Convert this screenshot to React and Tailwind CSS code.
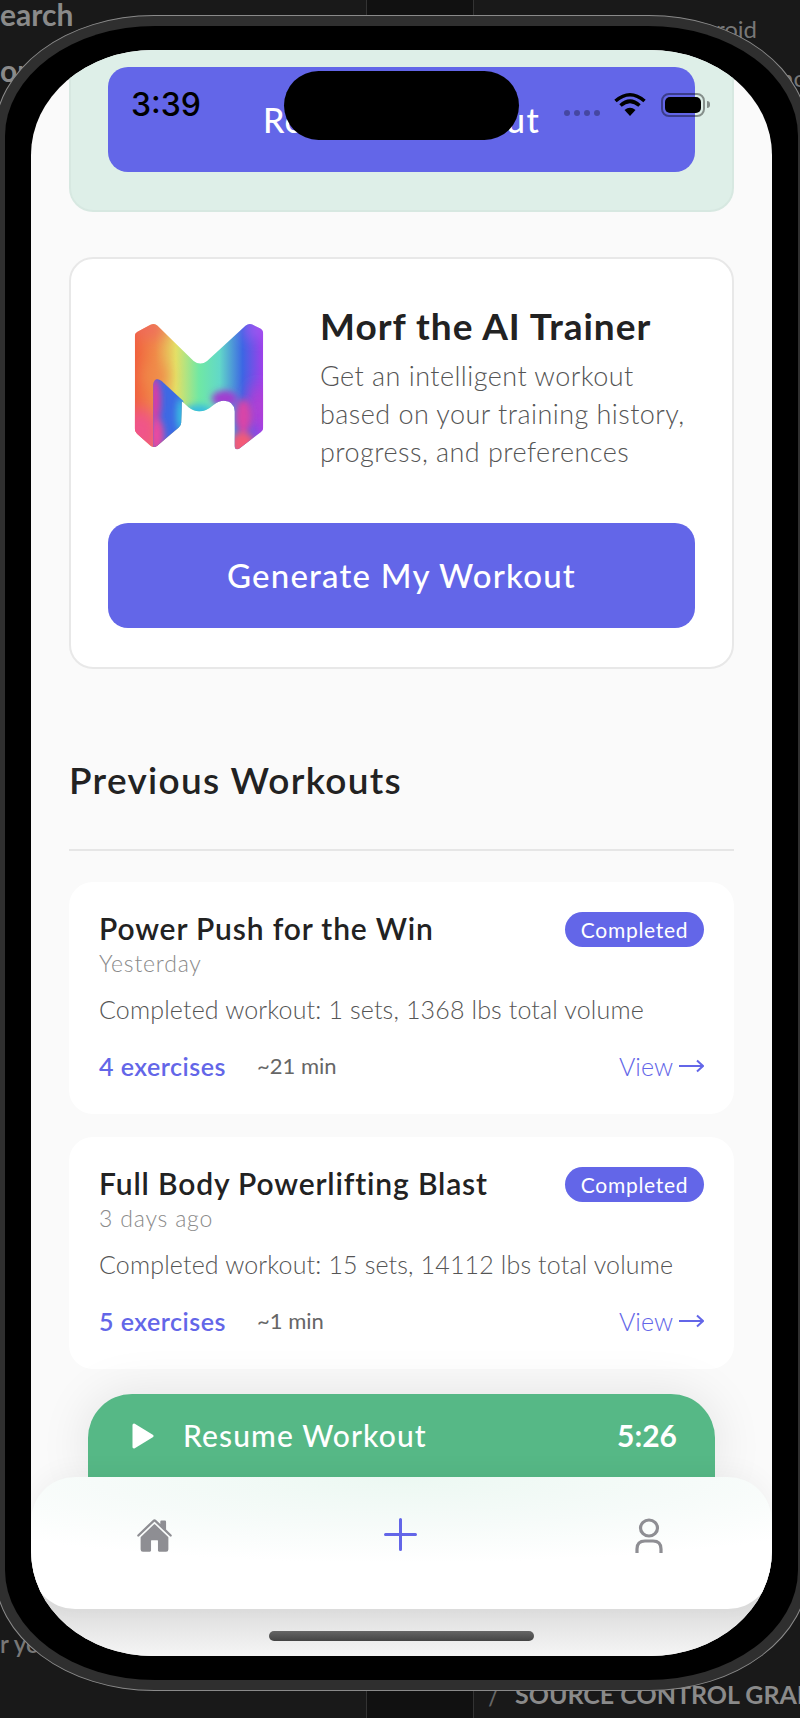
import React from "react";
import { IoHome } from "react-icons/io5";

const font = { fontFamily: "Lato, 'Liberation Sans', sans-serif" };

const workouts = [
  {
    title: "Power Push for the Win",
    date: "Yesterday",
    summary: "Completed workout: 1 sets, 1368 lbs total volume",
    exercises: "4 exercises",
    duration: "~21 min",
  },
  {
    title: "Full Body Powerlifting Blast",
    date: "3 days ago",
    summary: "Completed workout: 15 sets, 14112 lbs total volume",
    exercises: "5 exercises",
    duration: "~1 min",
  },
];

const MorfLogo = () => (
  <svg width="130" height="129" viewBox="103 68 386 382" className="shrink-0">
    <defs>
      <clipPath id="morf-m">
        <path d="M112 94 L152 73 Q164 67 172 75 L280 180 Q300 196 320 180 L434 76 Q444 67 454 72 L478 84 Q487 89 487 100 L487 378 Q487 386 480 391 L416 440 Q402 448 402 432 L402 330 Q400 298 370 298 Q355 298 340 310 Q300 345 265 318 L245 300 L243 364 Q243 372 236 378 L172 432 Q162 440 152 432 L112 396 Q105 390 105 380 L105 108 Q105 98 112 94 Z" />
      </clipPath>
      <clipPath id="morf-fold">
        <path d="M160 250 Q165 225 185 240 L250 300 L250 440 L160 440 Z" />
      </clipPath>
      <linearGradient id="morf-base" x1="0" y1="0" x2="1" y2="0">
        <stop offset="0" stopColor="#f0603e" />
        <stop offset="0.16" stopColor="#f08a48" />
        <stop offset="0.32" stopColor="#e4e066" />
        <stop offset="0.5" stopColor="#70e8a4" />
        <stop offset="0.66" stopColor="#62d8c8" />
        <stop offset="0.84" stopColor="#3c66e4" />
        <stop offset="1" stopColor="#a040ea" />
      </linearGradient>
      <filter id="morf-blur" x="-60%" y="-60%" width="220%" height="220%">
        <feGaussianBlur stdDeviation="24" />
      </filter>
      <filter id="morf-soft" x="-50%" y="-50%" width="200%" height="200%">
        <feGaussianBlur stdDeviation="10" />
      </filter>
    </defs>
    <g clipPath="url(#morf-m)">
      <rect x="105" y="60" width="382" height="400" fill="url(#morf-base)" />
      <g filter="url(#morf-blur)">
        <ellipse cx="150" cy="85" rx="55" ry="24" fill="#ee6a62" />
        <ellipse cx="165" cy="225" rx="34" ry="36" fill="#f08a48" />
        <ellipse cx="120" cy="390" rx="60" ry="70" fill="#f0558a" />
        <ellipse cx="465" cy="85" rx="36" ry="24" fill="#a85cf4" />
        <ellipse cx="470" cy="320" rx="28" ry="70" fill="#b83cd0" />
      </g>
      <g filter="url(#morf-soft)">
        <ellipse cx="292" cy="328" rx="40" ry="18" fill="#38bce0" />
        <ellipse cx="372" cy="292" rx="38" ry="24" fill="#a03cd0" />
        <ellipse cx="428" cy="345" rx="24" ry="50" fill="#d845a8" />
        <ellipse cx="425" cy="425" rx="34" ry="34" fill="#f25a78" />
      </g>
      <g clipPath="url(#morf-fold)">
        <rect x="150" y="220" width="110" height="230" fill="#3c6ae4" />
        <g filter="url(#morf-soft)">
          <ellipse cx="165" cy="300" rx="18" ry="70" fill="#d83ca4" />
          <ellipse cx="170" cy="400" rx="22" ry="50" fill="#e848a0" />
          <ellipse cx="242" cy="340" rx="13" ry="50" fill="#38c0e0" />
        </g>
      </g>
    </g>
  </svg>
);

const WifiIcon = () => (
  <svg width="32" height="24" viewBox="0 0 32 24" className="mb-[2px]">
    <path d="M1.5 9 Q16 -3.5 30.5 9" fill="none" stroke="#000" strokeWidth="3.6" />
    <path d="M6.5 13.5 Q16 5 25.5 13.5" fill="none" stroke="#000" strokeWidth="3.6" />
    <path d="M10.5 18 Q16 13.5 21.5 18 L16 24 Z" fill="#000" />
  </svg>
);

const StatusBar = () => (
  <div className="absolute inset-x-0 top-[43px] h-[24px] flex items-center pl-[100px] pr-[67px] text-black">
    <span className="text-[32px] leading-[24px] font-medium" style={{ fontFamily: "Inter, sans-serif" }}>
      3:39
    </span>
    <div className="ml-auto flex items-center">
      <div className="flex gap-[4px] mt-[16px] mr-[14px]">
        <span className="w-[6px] h-[6px] rounded-full bg-black/30" />
        <span className="w-[6px] h-[6px] rounded-full bg-black/30" />
        <span className="w-[6px] h-[6px] rounded-full bg-black/30" />
        <span className="w-[6px] h-[6px] rounded-full bg-black/30" />
      </div>
      <WifiIcon />
      <div className="ml-[15px] w-[44px] h-[24px] rounded-[8px] border-2 border-black/40 p-[2px] relative">
        <div className="w-full h-full rounded-[5px] bg-black" />
        <div className="absolute -right-[7px] top-[6px] w-[3px] h-[7px] rounded-r-full bg-black/40" />
      </div>
    </div>
  </div>
);

const WorkoutCard = ({ workout }) => (
  <div className="bg-white rounded-[24px] px-[30px] pt-[26px] pb-[32px]">
    <div className="flex justify-between items-start">
      <div>
        <div className="text-[30px] leading-[40px] font-semibold text-[#222] tracking-[0.85px]">{workout.title}</div>
        <div className="text-[23px] leading-[30px] font-light text-[#8a8a8a] tracking-[0.8px]">{workout.date}</div>
      </div>
      <div className="mt-[4px] h-[35px] w-[139px] rounded-full bg-[#6366e8] text-white text-[21px] tracking-[0.7px] flex items-center justify-center">
        Completed
      </div>
    </div>
    <div className="mt-[14px] text-[25px] leading-[34px] font-light text-[#555] tracking-[0.15px] whitespace-nowrap">
      {workout.summary}
    </div>
    <div className="mt-[24px] flex items-center text-[25px] leading-[32px]">
      <span className="w-[158px] font-semibold text-[#6366e8] tracking-[0.5px]">{workout.exercises}</span>
      <span className="text-[22px] text-[#666]">{workout.duration}</span>
      <span className="ml-auto flex items-center gap-[6px] text-[#6366e8] font-light">
        View
        <svg width="25" height="14" viewBox="0 0 25 14" fill="none" stroke="#6366e8" strokeWidth="2">
          <path d="M0 7 H24 M18 1.5 L24 7 L18 12.5" />
        </svg>
      </span>
    </div>
  </div>
);

const TabBar = () => (
  <div className="relative z-10 h-[132px] rounded-[44px] bg-white bg-[radial-gradient(ellipse_75%_65%_at_50%_0%,#ecf8f2_0%,#f6fbf9_55%,#ffffff_100%)] shadow-[0_-6px_24px_rgba(0,0,0,0.04)] flex items-start pt-[41px] pl-[105px]">
    <IoHome size={37} className="text-[#8e8e93] mt-[-1px]" />
    <svg width="33" height="33" viewBox="0 0 33 33" stroke="#6366e8" strokeWidth="3" strokeLinecap="round" className="ml-[211px]">
      <path d="M16.5 1.5 V31.5 M1.5 16.5 H31.5" />
    </svg>
    <svg width="28" height="36" viewBox="0 0 28 36" fill="none" stroke="#8e8e93" strokeWidth="3.2" className="ml-[218px]">
      <ellipse cx="14" cy="10" rx="8.5" ry="8" />
      <path d="M2 35 V31 Q2 23 10 23 H18 Q26 23 26 31 V35" />
    </svg>
  </div>
);

const ResumeBar = () => (
  <div className="mx-[57px] h-[83px] rounded-t-[44px] bg-[#56b886] text-white flex items-start pt-[25px] pl-[44px] pr-[38px] shadow-[0_0_50px_rgba(0,0,0,0.1)]">
    <svg width="22" height="26" viewBox="0 0 22 26" fill="#fff" stroke="#fff" strokeWidth="3" strokeLinejoin="round" className="mt-[4px]">
      <path d="M2 2 L20 13 L2 24 Z" />
    </svg>
    <span className="ml-[29px] text-[30px] leading-[32px] font-medium tracking-[1.1px]">Resume Workout</span>
    <span className="ml-auto text-[30px] leading-[32px] font-bold">5:26</span>
  </div>
);

export default function App() {
  return (
    <div className="w-[800px] h-[1718px] bg-[#191919] overflow-hidden relative" style={font}>
      {/* blurred desktop behind the phone */}
      <span className="absolute left-0 -top-[8px] text-[30px] font-bold text-[#8a8a8a]">earch</span>
      <span className="absolute left-0 top-[48px] text-[30px] font-bold text-[#8a8a8a]">or</span>
      <span className="absolute left-[716px] top-[11px] text-[24px] text-[#777]">roid</span>
      <span className="absolute left-[780px] top-[60px] text-[24px] text-[#777]">no</span>
      <span className="absolute left-0 top-[1626px] text-[24px] font-semibold text-[#777]">r yo</span>
      <span className="absolute left-[488px] top-[1676px] text-[26px] text-[#666]">/</span>
      <span className="absolute left-[515px] top-[1676px] text-[25px] font-bold text-[#8a8a8a] whitespace-nowrap">
        SOURCE CONTROL GRAPH
      </span>
      <div className="absolute left-[366px] top-0 w-[108px] h-[20px] bg-[#111] border-x border-[#333]" />
      <div className="absolute left-[366px] top-[1690px] w-[108px] h-[28px] bg-[#111] border-x border-[#333]" />

      <div className="relative mt-[15px] -ml-[6px] w-[815px] h-[1676px] rounded-[160px/120px] bg-[#2f2f2f] border border-[#8a8a8a] p-[10px]">
        <div className="w-full h-full rounded-[150px/110px] bg-black px-[26px] pt-[24px] pb-[24px]">
          <div className="relative w-full h-full rounded-[122px/105px] bg-[#fafafa] overflow-hidden">
            <div className="px-[38px]">
              <div className="h-[162px] bg-[#deefe8] border-2 border-t-0 border-[#d7e8e1] rounded-b-[24px] px-[37px] pt-[17px]">
                <div className="h-[105px] rounded-[20px] bg-[#6366e8] text-white text-[34px] tracking-[1.3px] font-medium flex items-center justify-center">
                  Resume Workout
                </div>
              </div>

              <div className="mt-[45px] bg-white border-2 border-[#e8e8e8] rounded-[24px] px-[37px] pt-[45px] pb-[39px]">
                <div className="flex items-center">
                  <div className="w-[212px] pl-[26px]">
                    <MorfLogo />
                  </div>
                  <div>
                    <div className="text-[37px] leading-[44px] font-bold text-[#222] tracking-[1px] whitespace-nowrap">
                      Morf the AI Trainer
                    </div>
                    <div className="mt-[9px] text-[27px] leading-[38px] font-light text-[#555] tracking-[0.45px] whitespace-nowrap">
                      Get an intelligent workout
                      <br />
                      based on your training history,
                      <br />
                      progress, and preferences
                    </div>
                  </div>
                </div>
                <div className="mt-[52px] h-[105px] rounded-[20px] bg-[#6366e8] text-white text-[33px] tracking-[1.2px] font-medium flex items-center justify-center">
                  Generate My Workout
                </div>
              </div>

              <h2 className="mt-[88px] text-[37px] leading-[46px] font-semibold text-[#222] tracking-[1.3px]">
                Previous Workouts
              </h2>
              <div className="mt-[46px] h-[2px] bg-[#e6e6e6]" />

              <div className="mt-[31px] flex flex-col gap-[23px]">
                {workouts.map((w) => (
                  <WorkoutCard key={w.title} workout={w} />
                ))}
              </div>
            </div>

            {/* notch + clock sit over the scrolled content */}
            <div className="absolute left-[253px] top-[21px] w-[235px] h-[69px] rounded-full bg-black" />
            <StatusBar />

            <div className="absolute inset-x-0 bottom-0">
              <ResumeBar />
              <TabBar />
              <div className="h-[91px] -mt-[44px] bg-gradient-to-b from-[#d8d8d8] via-[#dedede] to-[#f5f5f5] flex justify-center items-start pt-[66px]">
                <div className="w-[265px] h-[10px] rounded-full bg-gradient-to-b from-[#666] to-[#444]" />
              </div>
            </div>
          </div>
        </div>
      </div>
    </div>
  );
}
